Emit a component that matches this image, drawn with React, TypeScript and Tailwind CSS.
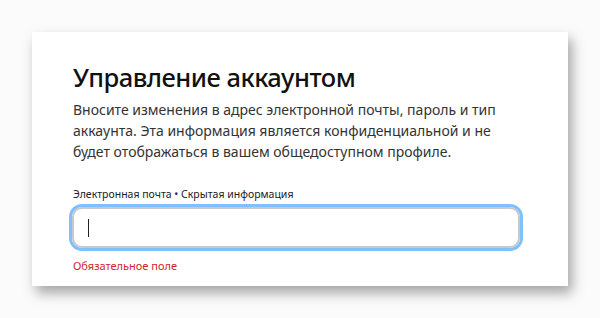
export default function App() {
  return (
    <main
      className="h-[318px] w-[600px] bg-[#fbfbfb] pt-8 pl-8"
      style={{ fontFamily: '"Noto Sans", "Open Sans", sans-serif' }}
    >
      <div className="w-[536px] h-[254px] bg-white shadow-[4px_7px_12px_rgba(0,0,0,0.35)] pl-[41px] pr-[40px] pt-[27px]">
        <h1 className="text-[25.5px] leading-[36px] text-[#111] font-medium tracking-[-0.5px]">
          Управление аккаунтом
        </h1>
        <p className="mt-[4px] text-[14px] leading-[21px] text-[#333] w-[440px]">
          Вносите изменения в адрес электронной почты, пароль и тип аккаунта. Эта информация является конфиденциальной и не будет отображаться в вашем общедоступном профиле.
        </p>

        <label className="block mt-[25px] text-[10.5px] leading-[14px] text-[#222]">
          Электронная почта • Скрытая информация
        </label>

        {/* input with focus ring */}
        <div className="mt-[3px] -ml-[4px] w-[454px] h-[47px] rounded-[13px] border-[3px] border-[#80c0ff]">
          <div className="h-full w-full rounded-[10px] border-2 border-[#c9c9c9] flex items-center pl-[14px]">
            <span className="block w-px h-[18px] bg-[#222]"></span>
          </div>
        </div>

        <p className="mt-[8px] text-[11px] leading-[14px] text-[#d0262c]">Обязательное поле</p>
      </div>
    </main>
  );
}
